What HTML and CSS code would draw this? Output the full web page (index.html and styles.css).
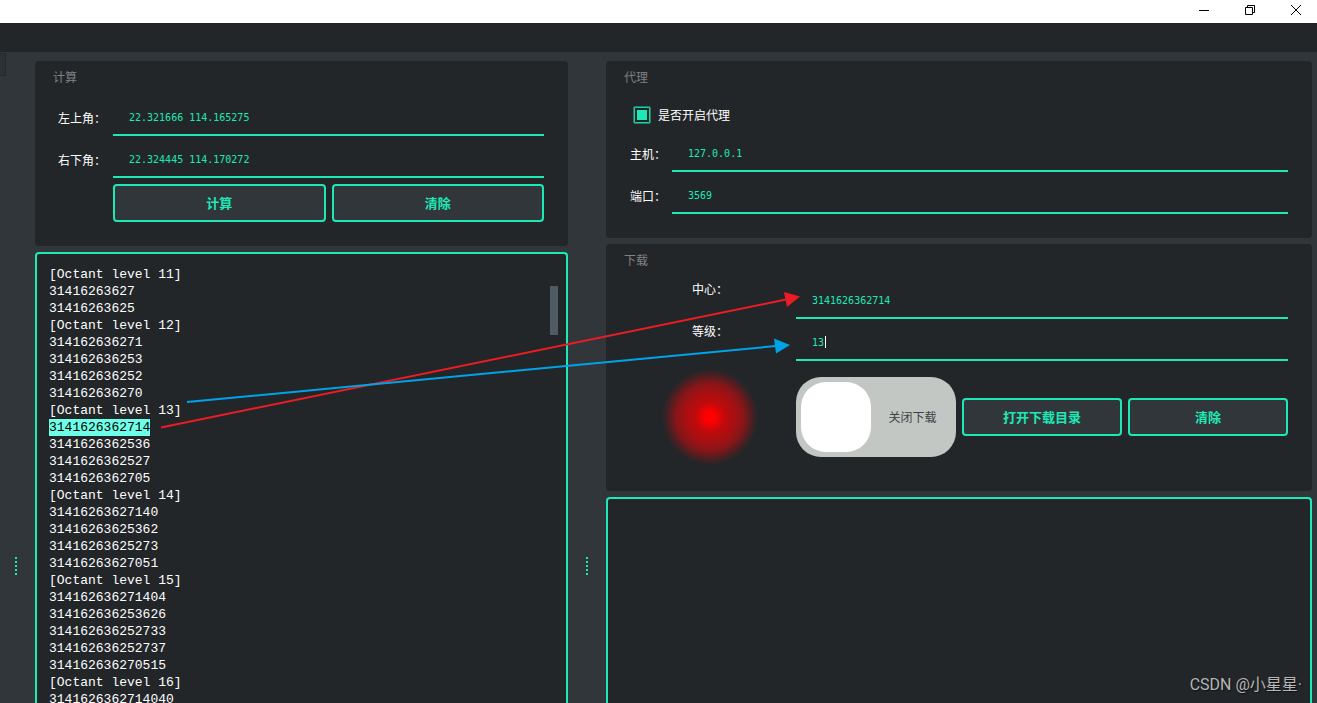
FILE: index.html
```html
<!DOCTYPE html>
<html lang="zh-CN">
<head>
<meta charset="utf-8">
<meta name="viewport" content="width=device-width, initial-scale=1">
<title>下载</title>
<link rel="stylesheet" href="styles.css">
</head>
<body>
<header class="titlebar">
  <button class="win-btn" type="button" aria-label="最小化"><svg width="12" height="12" viewBox="0 0 12 12"><path d="M1 6.500H11"/></svg></button>
  <button class="win-btn" type="button" aria-label="还原"><svg width="12" height="12" viewBox="0 0 12 12"><path d="M1.500 3.500H8.500V10.500H1.500ZM3.500 3.500V1.500H10.500V8.500H8.500"/></svg></button>
  <button class="win-btn" type="button" aria-label="关闭"><svg width="12" height="12" viewBox="0 0 12 12"><path d="M1 1L11 11M11 1L1 11"/></svg></button>
</header>
<div class="menubar"></div>

<main class="workspace">
  <div class="splitter splitter-edge"><span class="dock-tab"></span><span class="grip"><i></i><i></i><i></i><i></i><i></i></span></div>

  <div class="column">
    <section class="panel">
      <h2 class="panel-title">计算</h2>
      <form class="form form-compute">
        <label class="label" for="top-left">左上角：</label>
        <input class="field" id="top-left" type="text" value="22.321666 114.165275">
        <label class="label" for="bottom-right">右下角：</label>
        <input class="field" id="bottom-right" type="text" value="22.324445 114.170272">
        <div class="actions">
          <button class="btn" type="button">计算</button>
          <button class="btn" type="button">清除</button>
        </div>
      </form>
    </section>
    <div class="log">
<pre class="log-text">[Octant level 11]
31416263627
31416263625
[Octant level 12]
314162636271
314162636253
314162636252
314162636270
[Octant level 13]
<mark class="selected">3141626362714</mark>
3141626362536
3141626362527
3141626362705
[Octant level 14]
31416263627140
31416263625362
31416263625273
31416263627051
[Octant level 15]
314162636271404
314162636253626
314162636252733
314162636252737
314162636270515
[Octant level 16]
3141626362714040</pre>
      <span class="scroll-thumb"></span>
    </div>
  </div>

  <div class="splitter"><span class="grip"><i></i><i></i><i></i><i></i><i></i></span></div>

  <div class="column">
    <section class="panel">
      <h2 class="panel-title">代理</h2>
      <form class="form form-proxy">
        <div class="check-row">
          <input class="check" id="use-proxy" type="checkbox" checked>
          <label for="use-proxy">是否开启代理</label>
        </div>
        <label class="label" for="host">主机：</label>
        <input class="field" id="host" type="text" value="127.0.0.1">
        <label class="label" for="port">端口：</label>
        <input class="field" id="port" type="text" value="3569">
      </form>
    </section>

    <section class="panel">
      <h2 class="panel-title">下载</h2>
      <form class="form form-download">
        <label class="label label-top" for="center">中心：</label>
        <input class="field wide" id="center" type="text" value="3141626362714">
        <label class="label label-top" for="level">等级：</label>
        <div class="wide field-wrap">
          <input class="field" id="level" type="text" value="13">
          <span class="caret"></span>
        </div>
        <span class="lamp"></span>
        <label class="toggle"><input class="toggle-knob" type="checkbox" role="switch"><span class="toggle-text">关闭下载</span></label>
        <button class="btn" type="button">打开下载目录</button>
        <button class="btn" type="button">清除</button>
      </form>
    </section>

    <textarea class="output" aria-label="输出" readonly></textarea>
  </div>
</main>

<svg class="arrows" width="1317" height="703" viewBox="0 0 1317 703" aria-hidden="true">
  <g stroke="#ed1c24" fill="#ed1c24"><path d="M161 427.500L786 299.500" stroke-width="2"/><path d="M784 292L800 296.500L787 307Z" stroke="none"/></g>
  <g stroke="#00a2e8" fill="#00a2e8"><path d="M187 402L776 346" stroke-width="2"/><path d="M774 338.500L790 345L776 353.500Z" stroke="none"/></g>
</svg>
<div class="watermark">CSDN @小星星·</div>
</body>
</html>
```
FILE: styles.css
```css
* { box-sizing: border-box; }

:root {
  --accent: #1de9b6;
  --panel: #232629;
  --window: #31363b;
}

body {
  position: relative;
  margin: 0;
  height: 100vh;
  overflow: hidden;
  display: flex;
  flex-direction: column;
  background: var(--window);
  color: #fff;
  font: 12px/18px "Noto Sans CJK SC", sans-serif;
}

button, input, textarea { font: inherit; margin: 0; }

.titlebar {
  display: flex;
  justify-content: flex-end;
  gap: 4px;
  height: 23px;
  flex: none;
  background: #fff;
}

.win-btn {
  width: 42px;
  height: 20px;
  padding: 0;
  border: 0;
  background: none;
  display: flex;
  align-items: center;
  justify-content: center;
}

.win-btn svg { fill: none; stroke: #000; }

.menubar { height: 29px; flex: none; background: var(--panel); }

.workspace {
  flex: 1;
  min-height: 0;
  display: grid;
  grid-template-columns: 35px minmax(0, 533fr) 38px minmax(0, 706fr);
  grid-template-rows: minmax(0, 1fr);
  padding: 9px 5px 0 0;
}

.column { display: flex; flex-direction: column; gap: 6px; min-height: 0; }

.splitter {
  position: relative;
  display: flex;
  justify-content: center;
  align-items: flex-end;
  padding-bottom: 128px;
}

.splitter-edge { padding-right: 3px; }

.dock-tab {
  position: absolute;
  top: -8px;
  left: 0;
  width: 6px;
  height: 23px;
  border: 1px solid #25282c;
  border-left: 0;
  background: #2d3136;
}

.grip { display: flex; flex-direction: column; gap: 2px; }
.grip i { width: 2px; height: 2px; background: var(--accent); }

.panel {
  flex: none;
  padding: 7px 24px 24px;
  border-radius: 4px;
  background: var(--panel);
}

.panel-title {
  margin: 0 0 0 -6px;
  font-size: 12px;
  line-height: 18px;
  font-weight: 400;
  color: #7f8182;
}

.form { display: grid; gap: 6px; margin-top: 14px; }
.form-compute { grid-template-columns: 48px minmax(0, 1fr); }
.form-proxy { grid-template-columns: 36px minmax(0, 1fr); }
.form-download { grid-template-columns: repeat(4, minmax(0, 1fr)); align-items: center; }

.label { align-self: center; white-space: nowrap; }
.form-compute .label { margin-left: -1px; }
.label-top { align-self: start; justify-self: center; margin-top: -3px; }

.field {
  width: 100%;
  height: 36px;
  padding: 0 16px;
  border: 0;
  border-bottom: 2px solid var(--accent);
  border-radius: 0;
  outline: 0;
  background: transparent;
  color: var(--accent);
  font: 10px/16px "DejaVu Sans Mono", monospace;
}

.wide { grid-column: 2 / -1; }
.field-wrap { position: relative; display: flex; }

.caret {
  position: absolute;
  left: 29px;
  top: 11px;
  width: 1px;
  height: 12px;
  background: #fff;
}

.actions {
  grid-column: 2;
  display: grid;
  grid-template-columns: 1fr 1fr;
  gap: 6px;
}

.btn {
  height: 38px;
  padding: 0;
  border: 2px solid var(--accent);
  border-radius: 4px;
  background: var(--window);
  color: var(--accent);
  font-size: 13px;
  font-weight: 700;
}

.check-row {
  grid-column: 1 / -1;
  display: flex;
  align-items: center;
  gap: 7px;
  height: 30px;
  padding-left: 3px;
}

.check {
  appearance: none;
  width: 18px;
  height: 18px;
  border: 1px solid #1f7f69;
  border-radius: 2px;
  background: var(--accent);
  box-shadow: inset 0 0 0 1px #1fd0a4, inset 0 0 0 3px var(--panel);
}

.lamp {
  justify-self: center;
  width: 100px;
  height: 100px;
  border-radius: 50%;
  background: radial-gradient(circle closest-side, #f00 0, #f00 10%, #c00a0c 30%, #a61012 50%, #861618 68%, #4a1f22 84%, #232629 96%);
}

.toggle {
  display: flex;
  align-items: center;
  height: 80px;
  padding-left: 5px;
  border-radius: 25px;
  background: #c3c7c4;
  color: #3e4143;
}

.toggle-knob {
  appearance: none;
  width: 70px;
  height: 70px;
  border-radius: 25px;
  background: #fff;
}

.toggle-text { flex: 1; padding-right: 2px; text-align: center; }

.log {
  position: relative;
  flex: 1;
  min-height: 0;
  overflow: hidden;
  border: 2px solid var(--accent);
  border-bottom: 0;
  border-radius: 4px 4px 0 0;
  background: var(--panel);
}

.log-text {
  margin: 0;
  padding: 12px;
  font: 13px/17px "Liberation Mono", monospace;
}

.selected { display: inline-block; background: #6effe8; color: #000; }

.scroll-thumb {
  position: absolute;
  top: 32px;
  right: 8px;
  width: 8px;
  height: 49px;
  background: #4f5b62;
}

.output {
  flex: 1;
  min-height: 0;
  width: 100%;
  resize: none;
  border: 2px solid var(--accent);
  border-bottom: 0;
  border-radius: 4px 4px 0 0;
  outline: 0;
  background: var(--panel);
  color: #fff;
}

.arrows { position: absolute; top: 0; left: 0; pointer-events: none; }

.watermark {
  position: absolute;
  right: 15px;
  bottom: 8px;
  font: 16px/20px Roboto, "Noto Sans CJK SC", sans-serif;
  color: #b4b6b7;
  text-shadow: 1px 1px 1px #111;
}
```
